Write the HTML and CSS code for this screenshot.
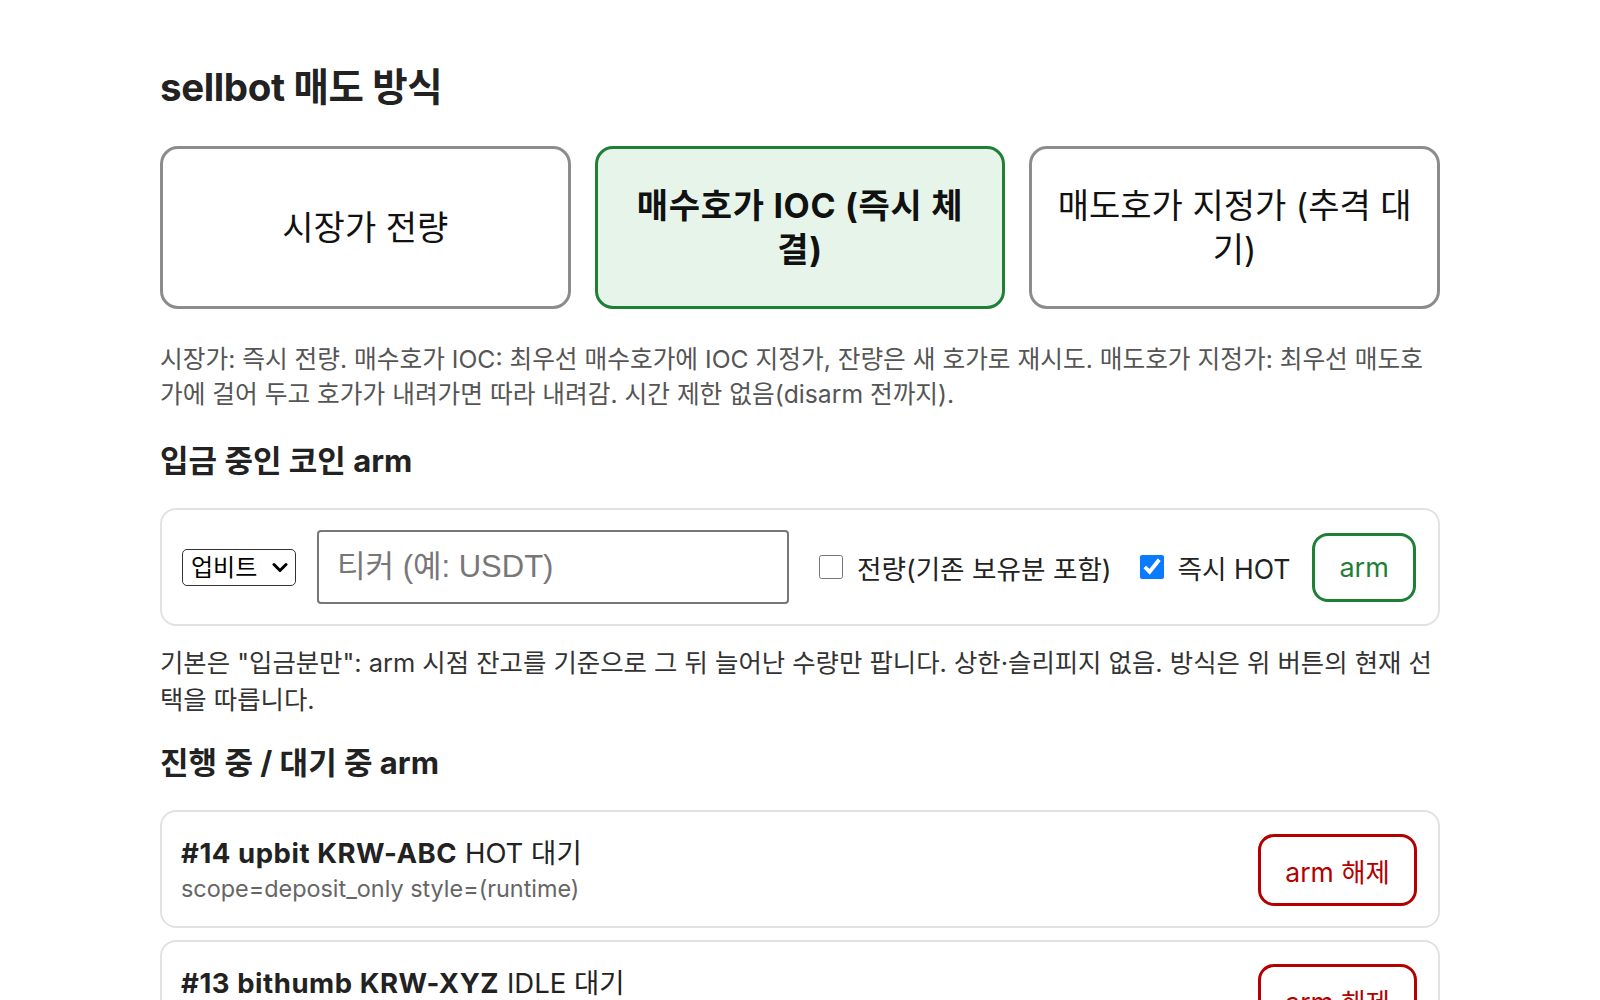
FILE: index.html
```html
<!DOCTYPE html>
<html lang="ko">
<head>
<meta charset="utf-8">
<title>sellbot 매도 방식</title>
<link rel="stylesheet" href="styles.css">
</head>
<body>
<main class="page">
  <h1 class="title">sellbot 매도 방식</h1>
  <div class="modes">
    <button class="mode" type="button">시장가 전량</button>
    <button class="mode active" type="button">매수호가 IOC (즉시 체결)</button>
    <button class="mode" type="button">매도호가 지정가 (추격 대기)</button>
  </div>
  <p class="desc">시장가: 즉시 전량. 매수호가 IOC: 최우선 매수호가에 IOC 지정가, 잔량은 새 호가로 재시도. 매도호가 지정가: 최우선 매도호가에 걸어 두고 호가가 내려가면 따라 내려감. 시간 제한 없음(disarm 전까지).</p>

  <h2 class="section first">입금 중인 코인 arm</h2>
  <div class="card form-row">
    <span class="select-wrap">
      <select class="exchange">
        <option>업비트</option>
        <option>빗썸</option>
      </select>
      <svg class="chev" width="16" height="11" viewBox="0 0 16 11"><path d="M2 2.5 L8 8.5 L14 2.5" fill="none" stroke="#000" stroke-width="3" stroke-linecap="round" stroke-linejoin="round"/></svg>
    </span>
    <input class="ticker" type="text" placeholder="티커 (예: USDT)">
    <label class="check full"><input type="checkbox"> 전량(기존 보유분 포함)</label>
    <label class="check hot"><input type="checkbox" checked> 즉시 HOT</label>
    <button class="btn-arm" type="button">arm</button>
  </div>
  <p class="hint">기본은 "입금분만": arm 시점 잔고를 기준으로 그 뒤 늘어난 수량만 팝니다. 상한·슬리피지 없음. 방식은 위 버튼의 현재 선택을 따릅니다.</p>

  <h2 class="section second">진행 중 / 대기 중 arm</h2>
  <div class="arm-list">
    <div class="card arm-item">
      <div class="info">
        <div class="item-title"><b>#14 upbit KRW-ABC</b> HOT 대기</div>
        <div class="item-sub">scope=deposit_only style=(runtime)</div>
      </div>
      <button class="btn-disarm" type="button">arm 해제</button>
    </div>
    <div class="card arm-item">
      <div class="info">
        <div class="item-title"><b>#13 bithumb KRW-XYZ</b> IDLE 대기</div>
        <div class="item-sub">scope=deposit_only style=(runtime)</div>
      </div>
      <button class="btn-disarm" type="button">arm 해제</button>
    </div>
  </div>
</main>
</body>
</html>
```

FILE: styles.css
```css
* { box-sizing: border-box; }

body {
  margin: 0;
  background: #fff;
  color: #222;
  font-family: "Inter", "Noto Sans CJK KR", sans-serif;
}

.page {
  width: 1280px;
  margin: 0 auto;
  padding-top: 66px;
}

.title {
  margin: 0 0 37px;
  font-size: 38.5px;
  line-height: 43px;
  font-weight: 700;
  color: #222;
  letter-spacing: -0.01em;
}

.modes {
  display: grid;
  grid-template-columns: repeat(3, 1fr);
  gap: 24px;
}

.mode {
  height: 163px;
  padding: 0 24px;
  border: 3px solid #8c8c8c;
  border-radius: 18px;
  background: #fff;
  color: #111;
  font-family: "Inter", "Noto Sans CJK KR", sans-serif;
  font-size: 34px;
  line-height: 44px;
  font-weight: 400;
  cursor: pointer;
}

.mode.active {
  border-color: #1f7f35;
  background: #e6f4e9;
  font-weight: 700;
  letter-spacing: 0.02em;
}

.desc {
  margin: 33px 0 0;
  font-size: 24.7px;
  line-height: 35px;
  color: #555;
}

.section {
  margin: 0;
  font-size: 31px;
  line-height: 36px;
  font-weight: 700;
  color: #222;
}

.section.first { margin: 31px 0 29px; }
.section.second { margin: 27px 0 29px; }

.card {
  border: 2px solid #e2e2e2;
  border-radius: 16px;
  background: #fff;
}

.form-row {
  display: flex;
  align-items: center;
  height: 118px;
  padding: 0 21px 0 20px;
}

.form-row > * { flex-shrink: 0; }

.select-wrap {
  position: relative;
  display: inline-flex;
  margin-right: 21px;
}

.exchange {
  appearance: none;
  -webkit-appearance: none;
  width: 114px;
  height: 37px;
  padding: 0 30px 0 8px;
  border: 1.5px solid #333;
  border-radius: 5px;
  background: #fff;
  color: #000;
  font-family: "Liberation Sans", "Noto Sans CJK KR", sans-serif;
  font-size: 24px;
}

.chev {
  position: absolute;
  right: 8px;
  top: 13px;
  pointer-events: none;
}

.form-row > .ticker {
  flex: 0 1 472px;
  min-width: 0;
  height: 74px;
  margin-right: 30px;
  padding: 0 18px;
  border: 2px solid #777;
  border-radius: 4px;
  font-family: "Liberation Sans", "Noto Sans CJK KR", sans-serif;
  font-size: 31px;
  color: #222;
}

.ticker::placeholder { color: #777; }

.check {
  display: inline-flex;
  align-items: center;
  gap: 14px;
  font-size: 26.6px;
  color: #222;
  white-space: nowrap;
}

.check input {
  width: 24px;
  height: 24px;
  margin: 0;
  accent-color: #0a7aff;
}

.check.full { margin-right: 28px; }
.check.hot { margin-right: 22px; }

.btn-arm,
.btn-disarm {
  border-radius: 16px;
  background: #fff;
  font-family: "Inter", "Noto Sans CJK KR", sans-serif;
  white-space: nowrap;
  cursor: pointer;
}

.btn-arm {
  height: 69px;
  padding: 0 24px;
  border: 3px solid #1f7f35;
  color: #1f7f35;
  font-size: 27px;
}

.hint {
  margin: 18px 0 0;
  font-size: 25.4px;
  line-height: 37px;
  color: #333;
}

.arm-list {
  display: flex;
  flex-direction: column;
  gap: 12px;
}

.arm-item {
  display: flex;
  align-items: center;
  justify-content: space-between;
  padding: 22px 21px 20px 19px;
}

.item-title {
  margin-bottom: 3px;
  font-size: 27.5px;
  line-height: 34px;
  color: #222;
}

.item-title b {
  font-weight: 700;
  letter-spacing: 0.02em;
}

.item-sub {
  font-size: 23.4px;
  line-height: 32px;
  color: #666;
}

.btn-disarm {
  height: 72px;
  padding: 0 24px;
  border: 3px solid #b50000;
  color: #b50000;
  font-size: 26.5px;
}
```
